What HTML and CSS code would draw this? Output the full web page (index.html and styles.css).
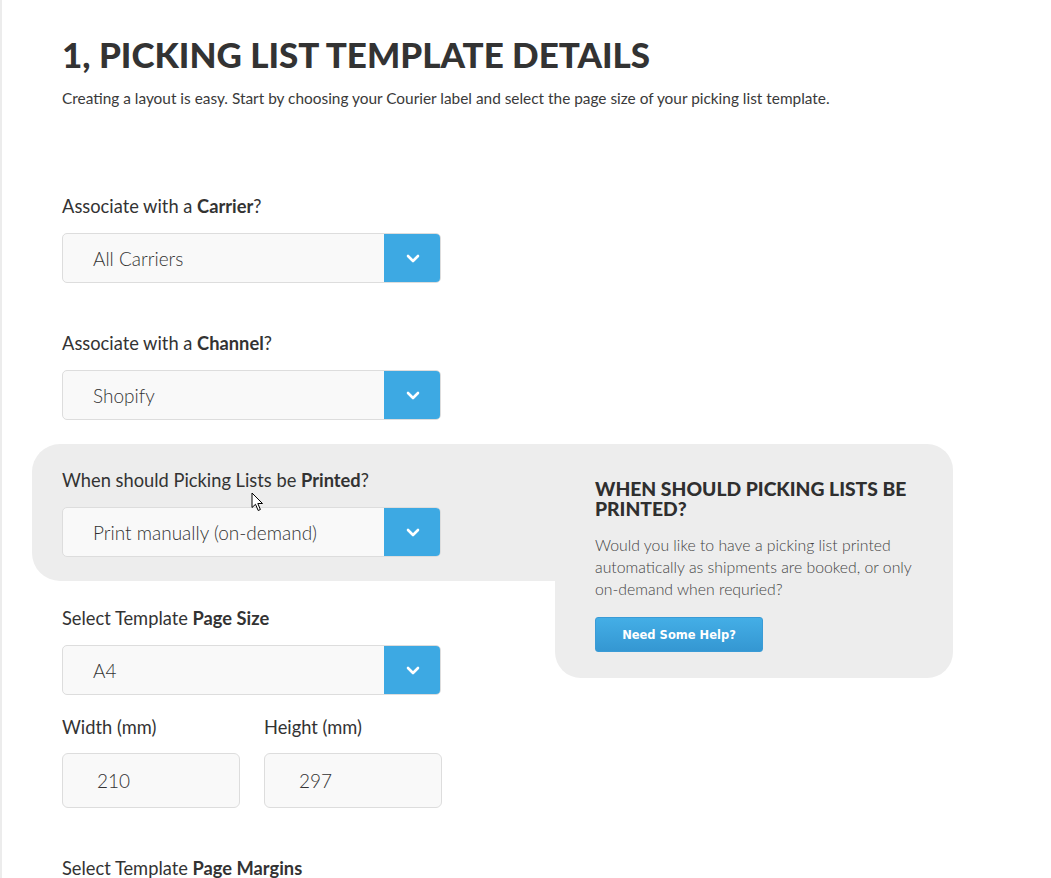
FILE: index.html
```html
<!DOCTYPE html>
<html lang="en">
<head>
<meta charset="utf-8">
<title>Picking List Template Details</title>
<link rel="stylesheet" href="styles.css">
</head>
<body>
<div class="page">
  <div class="content">
    <h1 class="title">1, PICKING LIST TEMPLATE DETAILS</h1>
    <p class="intro">Creating a layout is easy. Start by choosing your Courier label and select the page size of your picking list template.</p>

    <div class="field">
      <div class="label">Associate with a <b>Carrier</b>?</div>
      <div class="select">
        <span class="select-value">All Carriers</span>
        <span class="select-btn"><svg viewBox="0 0 14 9" width="14" height="9"><path d="M2 2 L7 7 L12 2" fill="none" stroke="#fff" stroke-width="2.6" stroke-linecap="round" stroke-linejoin="round"/></svg></span>
      </div>
    </div>

    <div class="field">
      <div class="label">Associate with a <b>Channel</b>?</div>
      <div class="select">
        <span class="select-value">Shopify</span>
        <span class="select-btn"><svg viewBox="0 0 14 9" width="14" height="9"><path d="M2 2 L7 7 L12 2" fill="none" stroke="#fff" stroke-width="2.6" stroke-linecap="round" stroke-linejoin="round"/></svg></span>
      </div>
    </div>

    <div class="field field-highlight">
      <div class="label">When should Picking Lists be <b>Printed</b>?</div>
      <div class="select">
        <span class="select-value">Print manually (on-demand)</span>
        <span class="select-btn"><svg viewBox="0 0 14 9" width="14" height="9"><path d="M2 2 L7 7 L12 2" fill="none" stroke="#fff" stroke-width="2.6" stroke-linecap="round" stroke-linejoin="round"/></svg></span>
      </div>
      <svg class="cursor" viewBox="0 0 13 20" width="13" height="20"><path d="M1 1 L1 15.5 L4.5 12.3 L7.2 18.5 L9.4 17.5 L6.8 11.5 L11.5 11.5 Z" fill="#fff" stroke="#000" stroke-width="1" stroke-linejoin="miter"/></svg>
      <div class="help">
        <h2 class="help-title">WHEN SHOULD PICKING LISTS BE PRINTED?</h2>
        <p class="help-text">Would you like to have a picking list printed automatically as shipments are booked, or only <span class="nowrap">on-demand</span> when requried?</p>
        <button class="help-btn" type="button">Need Some Help?</button>
      </div>
    </div>

    <div class="field field-size">
      <div class="label">Select Template <b>Page Size</b></div>
      <div class="select">
        <span class="select-value">A4</span>
        <span class="select-btn"><svg viewBox="0 0 14 9" width="14" height="9"><path d="M2 2 L7 7 L12 2" fill="none" stroke="#fff" stroke-width="2.6" stroke-linecap="round" stroke-linejoin="round"/></svg></span>
      </div>
    </div>

    <div class="field dims">
      <div class="dim">
        <div class="label">Width (mm)</div>
        <div class="input">210</div>
      </div>
      <div class="dim">
        <div class="label">Height (mm)</div>
        <div class="input">297</div>
      </div>
    </div>

    <div class="field field-last">
      <div class="label">Select Template <b>Page Margins</b></div>
    </div>
  </div>
</div>
</body>
</html>
```

FILE: styles.css
```css
html, body {
  margin: 0;
  padding: 0;
  background: #fff;
}

body {
  font-family: Lato, "Open Sans", sans-serif;
  color: #333;
}

.page {
  border-left: 2px solid #ececec;
  height: 100vh;
  box-sizing: border-box;
  overflow: hidden;
}

.content {
  padding: 34px 0 0 60px;
}

.title {
  margin: 0;
  font-family: Lato, sans-serif;
  font-weight: 900;
  font-size: 35px;
  line-height: 40px;
  color: #333;
}

.intro {
  margin: 14px 0 0;
  font-size: 15.4px;
  line-height: 20px;
  color: #3a3a3a;
  font-weight: 400;
  white-space: nowrap;
}

.field {
  margin-top: 0;
  margin-bottom: 48px;
  width: 379px;
}

.intro + .field {
  margin-top: 86px;
}

.field-last {
  margin-bottom: 0;
}

.label {
  font-size: 18.3px;
  line-height: 24px;
  color: #333;
  margin-bottom: 15px;
  white-space: nowrap;
}

.label b {
  font-weight: 700;
}

.select {
  display: flex;
  height: 50px;
  box-sizing: border-box;
  border: 1px solid #dddddd;
  border-radius: 5px;
  background: #f9f9f9;
  overflow: hidden;
}

.select-value {
  flex: 1;
  display: flex;
  align-items: center;
  padding-left: 30px;
  font-size: 19px;
  font-weight: 300;
  color: #333;
}

.select-btn {
  width: 57px;
  margin: -1px -1px -1px 0;
  background: #3da9e3;
  display: flex;
  align-items: center;
  justify-content: center;
  border-radius: 0 5px 5px 0;
}

.field-highlight {
  position: relative;
  width: 379px;
  margin-left: -30px;
  margin-top: -24px;
  margin-bottom: 25px;
  padding: 24px 114px 24px 30px;
  background: #ededed;
  border-radius: 28px 0 0 28px;
}

.cursor {
  position: absolute;
  left: 219px;
  top: 48px;
}

.help {
  position: absolute;
  top: 0;
  left: 100%;
  width: 398px;
  height: 234px;
  box-sizing: border-box;
  padding: 35px 36px 0 40px;
  background: #ededed;
  border-radius: 0 26px 26px 26px;
}

.help-title {
  margin: 0;
  font-family: Lato, sans-serif;
  font-weight: 900;
  font-size: 19.3px;
  line-height: 20px;
  color: #2f2f2f;
}

.help-text {
  margin: 15px 0 0;
  font-size: 15.8px;
  line-height: 22px;
  font-weight: 300;
  color: #444;
}

.nowrap {
  white-space: nowrap;
}

.help-btn {
  display: block;
  margin-top: 17px;
  width: 168px;
  height: 35px;
  border: 1px solid #3a9bd6;
  border-radius: 3px;
  background: linear-gradient(#44aee6, #3497d2);
  color: #fff;
  font-family: "DejaVu Sans", Verdana, sans-serif;
  font-weight: 700;
  font-size: 11.5px;
  padding: 0;
  cursor: pointer;
}

.field-size {
  margin-bottom: 20px;
}

.dims {
  display: flex;
  gap: 24px;
  width: 380px;
  margin-bottom: 48px;
}

.dim {
  flex: 1;
}

.dim .label {
  margin-bottom: 14px;
}

.input {
  height: 55px;
  box-sizing: border-box;
  border: 1px solid #dddddd;
  border-radius: 6px;
  background: #f9f9f9;
  display: flex;
  align-items: center;
  padding-left: 34px;
  font-size: 19px;
  font-weight: 300;
  color: #333;
}
```
